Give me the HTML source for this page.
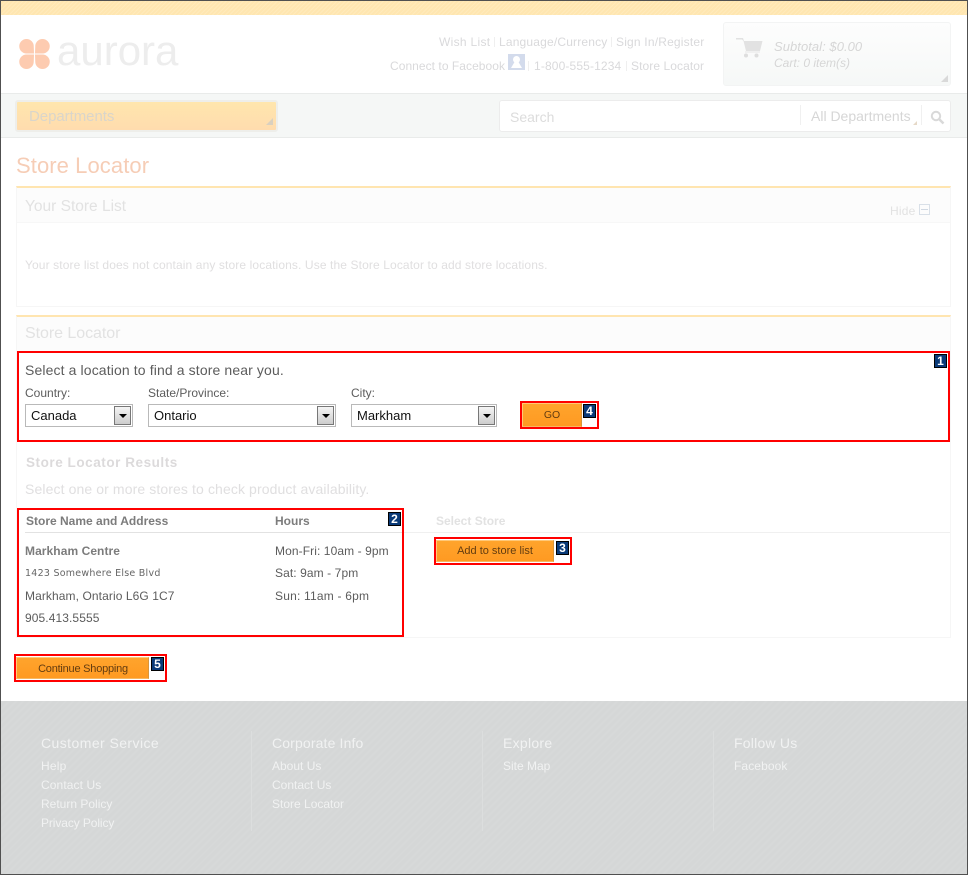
<!DOCTYPE html>
<html><head><meta charset="utf-8"><style>
html,body{margin:0;padding:0;background:#fff}
body{width:968px;height:875px;position:relative;overflow:hidden;font-family:"Liberation Sans",sans-serif;font-size:12px}
.a{position:absolute}
.t{position:absolute;white-space:nowrap;line-height:14px}
.hl{color:#d9d9db}
.d{color:#5c5c5c;letter-spacing:.09px}
.red{position:absolute;border:2px solid #f00;box-sizing:border-box}
.badge{position:absolute;width:13px;height:14px;background:#0a3a78;border:1px solid #000;box-sizing:border-box;color:#fff;font:bold 12px/12px "Liberation Sans",sans-serif;text-align:center}
.btn{position:absolute;box-sizing:border-box;border:1px solid #ffc878;border-right-color:#d9953a;border-bottom-color:#f7b860;background:linear-gradient(#ffa42c,#ff9a22);color:#633c10;text-align:center;font-size:11px;white-space:nowrap}
.sel{position:absolute;height:23px;box-sizing:border-box;border:1px solid #b9b9b9;background:#fff;color:#111;font-size:13px;line-height:21px;padding-left:5px}
.arr{position:absolute;top:1px;right:1px;width:17px;height:19px;box-sizing:border-box;border:1px solid #777;background:linear-gradient(#f4f4f4,#cdcdcd)}
.arr:after{content:"";position:absolute;left:4px;top:7px;border:4px solid transparent;border-top:4px solid #000;border-bottom:0}
.f1{color:#f1f2f2;font-size:14px}
.f2{color:#f1f2f2;font-size:12px}
.sep{position:absolute;width:1px;background:#efefef;height:10px}
</style></head><body>
<div class="a" style="left:1px;top:1px;width:966px;height:14px;background:#ffe6b0;background-image:repeating-linear-gradient(135deg,rgba(255,255,255,.14) 0 1px,transparent 1px 3px)"></div>

<!-- logo -->
<svg class="a" style="left:19px;top:39px" width="31" height="30" viewBox="0 0 31 30">
<g fill="#fdcbb0"><path d="M15 14.500 H7.500 A7.250 7.250 0 1 1 14.750 7.250 Z"/><path transform="matrix(-1 0 0 1 31 0)" d="M15 14.500 H7.500 A7.250 7.250 0 1 1 14.750 7.250 Z"/><path transform="matrix(1 0 0 -1 0 30)" d="M15 14.500 H7.500 A7.250 7.250 0 1 1 14.750 7.250 Z"/><path transform="matrix(-1 0 0 -1 31 30)" d="M15 14.500 H7.500 A7.250 7.250 0 1 1 14.750 7.250 Z"/></g></svg>
<div class="t" style="left:57px;top:35px;font-size:42px;line-height:32px;color:#ededed">aurora</div>

<!-- header links -->
<div class="t hl" style="left:439px;top:35px;letter-spacing:.3px">Wish List</div><div class="sep" style="left:494px;top:37px"></div>
<div class="t hl" style="left:499px;top:35px;letter-spacing:.18px">Language/Currency</div><div class="sep" style="left:611px;top:37px"></div>
<div class="t hl" style="left:616px;top:35px;letter-spacing:.19px">Sign In/Register</div>
<div class="t hl" style="left:390px;top:59px;letter-spacing:.05px">Connect to Facebook</div>
<svg class="a" style="left:508px;top:54px" width="17" height="17" viewBox="0 0 17 17"><rect width="17" height="16" fill="#d3dbec"/><circle cx="8.500" cy="5.500" r="3.500" fill="#fff"/><path d="M6.500 8 L3 14 H14 L10.500 8z" fill="#fff"/></svg>
<div class="sep" style="left:528px;top:61px"></div>
<div class="t hl" style="left:534px;top:59px;letter-spacing:.14px">1-800-555-1234</div><div class="sep" style="left:626px;top:61px"></div>
<div class="t hl" style="left:631px;top:59px;letter-spacing:.08px">Store Locator</div>

<!-- cart -->
<div class="a" style="left:723px;top:22px;width:228px;height:64px;box-sizing:border-box;border:1px solid #f3f4f4;border-radius:3px;background:linear-gradient(#fdfdfd,#f6f8f7)"></div>
<svg class="a" style="left:736px;top:38px" width="27" height="20" viewBox="0 0 27 20"><path d="M0 0 H7 L8 3 H26.500 L24 13 H10 L7.500 3 L6 1.500 H0z" fill="#e2e2e2"/><path d="M9 13.500 H24 V14.500 H9z" fill="#e6e6e6"/><circle cx="10" cy="17.500" r="2" fill="#dedede"/><circle cx="20.500" cy="17.500" r="2" fill="#dedede"/></svg>
<div class="t" style="left:774px;top:40px;color:#d6d6d6;font-style:italic;font-size:13px;letter-spacing:.05px">Subtotal: $0.00</div>
<div class="t" style="left:774px;top:56px;color:#d6d6d6;font-style:italic;font-size:12px">Cart: 0 item(s)</div>
<div class="a" style="left:941px;top:75px;border-style:solid;border-width:0 0 7px 7px;border-color:transparent transparent #d9d9d9 transparent"></div>

<!-- nav -->
<div class="a" style="left:1px;top:93px;width:966px;height:45px;box-sizing:border-box;background:#f5f7f6;border-top:1px solid #e9ebea;border-bottom:1px solid #e9ebea"></div>
<div class="a" style="left:15px;top:100px;width:263px;height:32px;box-sizing:border-box;border:2px solid #eeeeea;border-radius:3px;background:linear-gradient(#ffe6ad,#ffdcae)"></div>
<div class="t" style="left:29px;top:108px;font-size:15px;line-height:18px;color:#d9d5cb;letter-spacing:-.05px">Departments</div>
<div class="a" style="left:266px;top:118px;border-style:solid;border-width:0 0 7px 7px;border-color:transparent transparent #d9d0c0 transparent"></div>
<div class="a" style="left:499px;top:100px;width:452px;height:32px;box-sizing:border-box;border:1px solid #ececec;border-radius:3px;background:#fff"></div>
<div class="t" style="left:510px;top:108px;font-size:14px;line-height:18px;color:#dcdcdc">Search</div>
<div class="a" style="left:800px;top:105px;width:1px;height:20px;background:#f0f0f0"></div>
<div class="t" style="left:811px;top:107px;font-size:14px;line-height:18px;color:#d6d6d6">All Departments</div>
<div class="a" style="left:913px;top:121px;border-style:solid;border-width:0 0 4px 4px;border-color:transparent transparent #e6d9c8 transparent"></div>
<div class="a" style="left:921px;top:105px;width:1px;height:20px;background:#f0f0f0"></div>
<svg class="a" style="left:930px;top:110px" width="15" height="15" viewBox="0 0 15 15"><circle cx="6" cy="6" r="4.200" fill="none" stroke="#d9d9d9" stroke-width="2"/><path d="M9 9 L13.500 13.500" stroke="#d9d9d9" stroke-width="2.500"/></svg>

<!-- title -->
<div class="t" style="left:16px;top:153px;font-size:22px;line-height:25px;color:#f6cdb6;letter-spacing:.08px">Store Locator</div>

<!-- panel 1 -->
<div class="a" style="left:16px;top:186px;width:935px;height:121px;box-sizing:border-box;border:1px solid #f6f6f6;border-top:2px solid #ffe5b0;background:#fff"></div>
<div class="a" style="left:17px;top:188px;width:933px;height:34px;background:#fcfcfc;border-bottom:1px solid #f7f7f7"></div>
<div class="t" style="left:25px;top:198px;font-size:15.500px;line-height:18px;color:#e2e2e2">Your Store List</div>
<div class="t" style="left:890px;top:204px;color:#e2e2e2;letter-spacing:.2px">Hide</div>
<div class="a" style="left:919px;top:204px;width:11px;height:11px;box-sizing:border-box;border:1px solid #d9e0e8"></div>
<div class="a" style="left:921px;top:209px;width:7px;height:1px;background:#d0d8e2"></div>
<div class="t" style="left:25px;top:258px;color:#e0dfe0;letter-spacing:.115px">Your store list does not contain any store locations. Use the Store Locator to add store locations.</div>

<!-- panel 2 -->
<div class="a" style="left:16px;top:315px;width:935px;height:323px;box-sizing:border-box;border:1px solid #f6f6f6;border-top:2px solid #ffe5b0;background:#fff"></div>
<div class="a" style="left:17px;top:317px;width:933px;height:34px;background:#fcfcfc"></div>
<div class="t" style="left:25px;top:325px;font-size:16px;line-height:18px;color:#e2e2e2;letter-spacing:-.05px">Store Locator</div>

<!-- region 1 -->
<div class="red" style="left:17px;top:351px;width:933px;height:91px"></div>
<div class="badge" style="left:934px;top:354px">1</div>
<div class="t" style="left:25px;top:363px;font-size:14px;line-height:15px;color:#5c5c5c;letter-spacing:.12px">Select a location to find a store near you.</div>
<div class="t" style="left:25px;top:386px;color:#5c5c5c">Country:</div>
<div class="t" style="left:148px;top:386px;color:#5c5c5c">State/Province:</div>
<div class="t" style="left:351px;top:386px;color:#5c5c5c">City:</div>
<div class="sel" style="left:25px;top:404px;width:108px">Canada<div class="arr"></div></div>
<div class="sel" style="left:148px;top:404px;width:188px">Ontario<div class="arr"></div></div>
<div class="sel" style="left:351px;top:404px;width:146px">Markham<div class="arr"></div></div>
<div class="red" style="left:520px;top:401px;width:79px;height:28px"></div>
<div class="btn" style="left:522px;top:403px;width:60px;height:24px;line-height:23px;font-size:10.500px">GO</div>
<div class="badge" style="left:583px;top:404px">4</div>

<!-- results -->
<div class="t" style="left:26px;top:456px;font-weight:bold;color:#dcdadb;font-size:13.500px;letter-spacing:.55px">Store Locator Results</div>
<div class="t" style="left:25px;top:482px;font-size:14px;line-height:15px;color:#e0dfe0;letter-spacing:.11px">Select one or more stores to check product availability.</div>

<!-- region 2 -->
<div class="a" style="left:25px;top:532px;width:925px;height:1px;background:#f0f0f0"></div>
<div class="a" style="left:25px;top:532px;width:377px;height:1px;background:#e2e2e2"></div>
<div class="t" style="left:26px;top:514px;font-weight:bold;color:#7c7c7c">Store Name and Address</div>
<div class="t" style="left:275px;top:514px;font-weight:bold;color:#7c7c7c">Hours</div>
<div class="t" style="left:436px;top:514px;font-weight:bold;color:#e2e2e2">Select Store</div>
<div class="t" style="left:25px;top:544px;font-weight:bold;color:#7c7c7c;letter-spacing:.07px">Markham Centre</div>
<div class="t" style="left:25px;top:567px;font-family:'DejaVu Sans',sans-serif;font-size:9.500px;color:#666;letter-spacing:.25px">1423 Somewhere Else Blvd</div>
<div class="t d" style="left:25px;top:589px">Markham, Ontario L6G 1C7</div>
<div class="t d" style="left:25px;top:611px">905.413.5555</div>
<div class="t d" style="left:275px;top:544px">Mon-Fri: 10am - 9pm</div>
<div class="t d" style="left:275px;top:566px">Sat: 9am - 7pm</div>
<div class="t d" style="left:275px;top:589px;letter-spacing:.2px">Sun: 11am - 6pm</div>
<div class="red" style="left:17px;top:508px;width:387px;height:129px"></div>
<div class="badge" style="left:388px;top:512px">2</div>

<!-- add -->
<div class="red" style="left:434px;top:537px;width:138px;height:28px"></div>
<div class="btn" style="left:436px;top:540px;width:118px;height:22px;line-height:21px">Add to store list</div>
<div class="badge" style="left:556px;top:541px">3</div>

<!-- continue -->
<div class="red" style="left:14px;top:654px;width:153px;height:28px"></div>
<div class="btn" style="left:16px;top:657px;width:133px;height:22px;line-height:22px;letter-spacing:-.22px;padding-left:1px">Continue Shopping</div>
<div class="badge" style="left:151px;top:657px">5</div>

<!-- footer -->
<div class="a" style="left:1px;top:701px;width:966px;height:173px;background:#d5d7d7;background-image:repeating-linear-gradient(135deg,rgba(255,255,255,.05) 0 2px,transparent 2px 5px)"></div>
<div class="a" style="left:251px;top:731px;width:1px;height:100px;background:#dcdede"></div>
<div class="a" style="left:482px;top:731px;width:1px;height:100px;background:#dcdede"></div>
<div class="a" style="left:713px;top:731px;width:1px;height:100px;background:#dcdede"></div>
<div class="t f1" style="left:41px;top:736px;letter-spacing:.43px">Customer Service</div>
<div class="t f2" style="left:41px;top:759px;letter-spacing:.2px">Help</div>
<div class="t f2" style="left:41px;top:778px;letter-spacing:.1px">Contact Us</div>
<div class="t f2" style="left:41px;top:797px">Return Policy</div>
<div class="t f2" style="left:41px;top:816px;letter-spacing:-.1px">Privacy Policy</div>
<div class="t f1" style="left:272px;top:736px;letter-spacing:.14px">Corporate Info</div>
<div class="t f2" style="left:272px;top:759px">About Us</div>
<div class="t f2" style="left:272px;top:778px">Contact Us</div>
<div class="t f2" style="left:272px;top:797px">Store Locator</div>
<div class="t f1" style="left:503px;top:736px;letter-spacing:.28px">Explore</div>
<div class="t f2" style="left:503px;top:759px">Site Map</div>
<div class="t f1" style="left:734px;top:736px;letter-spacing:.22px">Follow Us</div>
<div class="t f2" style="left:734px;top:759px;letter-spacing:.1px">Facebook</div>

<!-- screenshot frame -->
<div class="a" style="left:0;top:0;width:968px;height:875px;box-sizing:border-box;border:1px solid #505050"></div>
</body></html>
